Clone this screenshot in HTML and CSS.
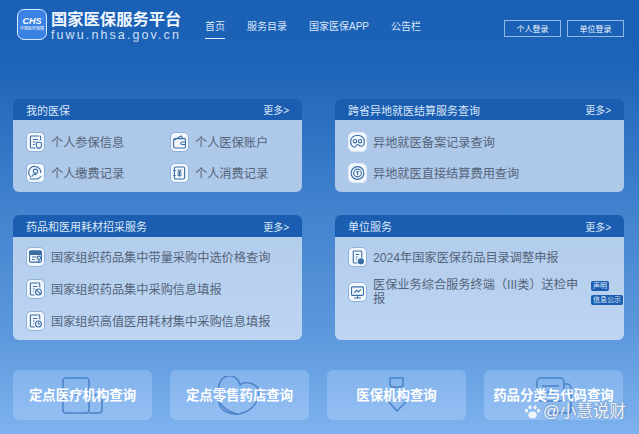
FILE: index.html
```html
<!DOCTYPE html>
<html lang="zh-CN">
<head>
  <meta charset="UTF-8">
  <title>国家医保服务平台</title>
  <link rel="stylesheet" href="styles.css">
</head>
<body>
  <header class="topo">
    <div class="marca">
      <div class="logo">
        <span class="logo-chs">CHS</span>
        <span class="logo-sub">中国医疗保障</span>
      </div>
      <div class="marca-texto">
        <div class="marca-nome">国家医保服务平台</div>
        <div class="marca-url">fuwu.nhsa.gov.cn</div>
      </div>
    </div>
    <nav class="menu">
      <a class="active">首页</a>
      <a>服务目录</a>
      <a>国家医保APP</a>
      <a>公告栏</a>
    </nav>
    <div class="entrar">
      <button>个人登录</button>
      <button>单位登录</button>
    </div>
  </header>

  <main class="paineis">
    <section class="painel painel-curto">
      <div class="painel-topo"><span>我的医保</span><span class="mais">更多&gt;</span></div>
      <div class="painel-corpo duas-col">
        <div class="item">
          <span class="icone"><svg viewBox="0 0 20 20"><path d="M14 3H5a1 1 0 0 0-1 1v12a1 1 0 0 0 1 1h5M16 8V4a1 1 0 0 0-1-1M7 7h6M7 10h3M7 13h2"/><path d="M11 11l3-1 3 1v3c0 2-1.500 3-3 3.500-1.500-.5-3-1.500-3-3.500z"/></svg></span>
          <span>个人参保信息</span>
        </div>
        <div class="item">
          <span class="icone"><svg viewBox="0 0 20 20"><path d="M3 8v7a2 2 0 0 0 2 2h11a1 1 0 0 0 1-1V7a1 1 0 0 0-1-1H5a2 2 0 0 0-2 2l9-5 2 3"/><path d="M17 10h-4a1.500 1.500 0 0 0 0 3h4"/></svg></span>
          <span>个人医保账户</span>
        </div>
        <div class="item">
          <span class="icone"><svg viewBox="0 0 20 20"><path d="M5 15a7 7 0 1 1 11-5"/><circle cx="10" cy="8" r="2.500"/><path d="M6 14c1-2 3-3 5-2M3 17h9l5-3"/></svg></span>
          <span>个人缴费记录</span>
        </div>
        <div class="item">
          <span class="icone"><svg viewBox="0 0 20 20"><rect x="4" y="3" width="12" height="14" rx="1.500"/><path d="M8 6l2 3 2-3M7.500 10h5M7.500 12.500h5M10 9v5.500M2.500 7h3M2.500 13h3"/></svg></span>
          <span>个人消费记录</span>
        </div>
      </div>
    </section>

    <section class="painel painel-curto">
      <div class="painel-topo"><span>跨省异地就医结算服务查询</span><span class="mais">更多&gt;</span></div>
      <div class="painel-corpo">
        <div class="item">
          <span class="icone sem-borda"><svg viewBox="0 0 20 20"><path d="M6 16c-3-1-4-4-4-7a8 7 0 0 1 16 0c0 3-1 6-4 6-2 0-2-2-4-2s-2 4-4 3z"/><circle cx="7" cy="9" r="2"/><circle cx="13" cy="9" r="2"/></svg></span>
          <span>异地就医备案记录查询</span>
        </div>
        <div class="item">
          <span class="icone sem-borda"><svg viewBox="0 0 20 20"><circle cx="10" cy="10" r="7.500"/><circle cx="10" cy="10" r="4.500"/><path d="M8 8.500h4M10 8.500v4"/></svg></span>
          <span>异地就医直接结算费用查询</span>
        </div>
      </div>
    </section>

    <section class="painel painel-alto">
      <div class="painel-topo"><span>药品和医用耗材招采服务</span><span class="mais">更多&gt;</span></div>
      <div class="painel-corpo">
        <div class="item">
          <span class="icone"><svg viewBox="0 0 20 20"><rect x="3" y="3" width="14" height="13" rx="1.500"/><path class="cheio" d="M3 4.500A1.500 1.500 0 0 1 4.500 3h11A1.500 1.500 0 0 1 17 4.500V7H3z"/><path d="M6 10h5M6 13h3"/><circle cx="14" cy="11" r="2"/><path d="M14 13v4"/></svg></span>
          <span>国家组织药品集中带量采购中选价格查询</span>
        </div>
        <div class="item">
          <span class="icone"><svg viewBox="0 0 20 20"><path d="M9 17H5a1 1 0 0 1-1-1V4a1 1 0 0 1 1-1h9a1 1 0 0 1 1 1v4M7 7h5M7 10h2M7 13h1"/><circle cx="13.500" cy="13.500" r="3.500"/><path d="M11 11l5 5"/></svg></span>
          <span>国家组织药品集中采购信息填报</span>
        </div>
        <div class="item">
          <span class="icone"><svg viewBox="0 0 20 20"><path d="M9 17H5a1 1 0 0 1-1-1V4a1 1 0 0 1 1-1h9a1 1 0 0 1 1 1v4M7 7h5M7 10h2M7 13h1"/><circle cx="13.500" cy="13.500" r="3.500"/><path d="M13.500 11.500v2h2"/></svg></span>
          <span>国家组织高值医用耗材集中采购信息填报</span>
        </div>
      </div>
    </section>

    <section class="painel painel-alto">
      <div class="painel-topo"><span>单位服务</span><span class="mais">更多&gt;</span></div>
      <div class="painel-corpo">
        <div class="item">
          <span class="icone"><svg viewBox="0 0 20 20"><path d="M10 17H6a1 1 0 0 1-1-1V4a1 1 0 0 1 1-1h8a1 1 0 0 1 1 1v7M8 7h4M8 10h2M8 13h1"/><circle class="cheio" cx="14" cy="15" r="3"/></svg></span>
          <span>2024年国家医保药品目录调整申报</span>
        </div>
        <div class="item item-duplo">
          <span class="icone"><svg viewBox="0 0 20 20"><rect x="3" y="4" width="14" height="10" rx="1"/><path d="M6 11l3-3 2 2 3-3M6 17h8M10 14v3"/></svg></span>
          <span class="item-texto">医保业务综合服务终端（III类）送检申报</span>
          <span class="selos">
            <span class="selo">声明</span>
            <span class="selo">信息公示</span>
          </span>
        </div>
      </div>
    </section>
  </main>

  <div class="atalhos">
    <a class="atalho">
      <svg viewBox="0 0 50 40"><rect x="4" y="2" width="26" height="35" rx="3"/><path d="M30 19h10a3 3 0 0 1 3 3v12a3 3 0 0 1-3 3H30M17 14v6"/></svg>
      <span>定点医疗机构查询</span>
    </a>
    <a class="atalho">
      <svg viewBox="0 0 50 40"><path d="M3 14a10 11 0 0 1 21-5c5-5 20-2 19 10-1 8-9 17-20 19-10 1-19-4-20-11z"/><path d="M4 27c4 6 9 9 17 11"/></svg>
      <span>定点零售药店查询</span>
    </a>
    <a class="atalho">
      <svg viewBox="0 0 50 40"><path d="M17 2h13v6a3 3 0 0 1-3 3h-7a3 3 0 0 1-3-3z"/><path d="M15 25l9 10 10-10"/></svg>
      <span>医保机构查询</span>
    </a>
    <a class="atalho">
      <svg viewBox="0 0 50 40"><rect x="7" y="2" width="27" height="23" rx="4"/><path d="M12 10h17M12 16h12M34 8h3a4 4 0 0 1 4 4v22a3 3 0 0 1-3 3H20"/></svg>
      <span>药品分类与代码查询</span>
    </a>
  </div>

  <div class="marca-dagua">
    <svg viewBox="0 0 20 20"><ellipse cx="10" cy="14" rx="5" ry="4"/><ellipse cx="7" cy="5" rx="1.800" ry="2.500"/><ellipse cx="13" cy="5" rx="1.800" ry="2.500"/><ellipse cx="3" cy="9" rx="1.800" ry="2.300"/><ellipse cx="17" cy="9" rx="1.800" ry="2.300"/></svg>
    <span>@小慧说财</span>
  </div>
</body>
</html>
```

FILE: styles.css
```css
html, body {
  margin: 0;
  height: 434px;
  overflow: hidden;
}
body {
  position: relative;
  width: 639px;
  font-family: "Liberation Sans", "Noto Sans CJK SC", sans-serif;
  background: linear-gradient(180deg, #1a60b5 0, #1c62b7 60px, #3d7fcb 190px, #5c97dc 330px, #7db2ee 434px);
  color: #55647a;
}
.topo {
  display: flex;
  align-items: flex-start;
  height: 99px;
  box-sizing: border-box;
  padding: 9px 15px 0 17px;
}
.marca {
  display: flex;
  gap: 4px;
}
.logo {
  width: 30px;
  height: 31px;
  box-sizing: border-box;
  border: 1px solid #d6e7fb;
  border-radius: 7px;
  background: #3a82e4;
  color: white;
  display: flex;
  flex-direction: column;
  align-items: center;
  padding-top: 7px;
}
.logo-chs {
  font-size: 9px;
  line-height: 9px;
  font-weight: bold;
  font-style: italic;
}
.logo-sub {
  font-size: 4px;
  line-height: 5px;
  white-space: nowrap;
}
.marca-texto {
  width: 131px;
  padding-top: 1px;
  color: #eef5fd;
}
.marca-nome {
  font-size: 16.300px;
  line-height: 19px;
  font-weight: bold;
  white-space: nowrap;
}
.marca-url {
  font-size: 12.500px;
  line-height: 13px;
  letter-spacing: 2.100px;
  white-space: nowrap;
  color: #cfe0f5;
}
.menu {
  display: flex;
  gap: 22px;
  margin-left: 23px;
  padding-top: 10px;
  font-size: 10px;
  line-height: 16px;
  color: #d8e6f7;
}
.menu a {
  height: 19px;
  white-space: nowrap;
}
.menu a.active {
  border-bottom: 1px solid #e8f1fb;
}
.entrar {
  display: flex;
  gap: 6px;
  margin-left: auto;
  padding-top: 11px;
}
.entrar button {
  width: 57px;
  height: 17px;
  padding: 0;
  background: transparent;
  border: 1px solid #8fb9e8;
  color: #f0f6fd;
  font-family: inherit;
  font-size: 8px;
}
.paineis {
  display: grid;
  grid-template-columns: 289px 289px;
  column-gap: 33px;
  row-gap: 23px;
  padding: 0 15px 0 13px;
}
.painel {
  border-radius: 6px;
  overflow: hidden;
  display: flex;
  flex-direction: column;
}
.painel-curto {
  height: 93px;
}
.painel-alto {
  height: 125px;
}
.painel-topo {
  display: flex;
  justify-content: space-between;
  align-items: center;
  height: 21px;
  flex-shrink: 0;
  padding: 0 13px;
  background: #1b5db0;
  color: #d9e7f8;
  font-size: 11px;
}
.painel-alto .painel-topo {
  height: 22px;
}
.mais {
  font-size: 10px;
}
.painel-corpo {
  flex: 1;
  padding: 4px 12px 4px 13px;
  display: flex;
  flex-direction: column;
}
.painel-curto .painel-corpo {
  padding-top: 6px;
  background: #adc8e8;
}
.painel-curto .item {
  height: 31.500px;
}
.painel-alto .painel-corpo {
  background: linear-gradient(180deg, #b3cdec, #bdd5f2);
}
.duas-col {
  display: grid;
  grid-template-columns: 144px 1fr;
  align-content: start;
}
.item {
  display: flex;
  align-items: center;
  gap: 6px;
  height: 32px;
  font-size: 12.200px;
  white-space: nowrap;
}
.icone {
  width: 19px;
  height: 20px;
  flex-shrink: 0;
  box-sizing: border-box;
  background: #f2f7fd;
  border: 1px solid #8fb2da;
  border-radius: 5px;
  display: flex;
}
.icone.sem-borda {
  border-color: #dce9f8;
}
.icone svg {
  width: 100%;
  height: 100%;
  fill: none;
  stroke: #3a6ea5;
  stroke-width: 1.300;
}
.icone svg .cheio {
  fill: #3a6ea5;
}
.item-duplo {
  height: 38px;
  line-height: 14px;
  white-space: normal;
}
.item-texto {
  width: 210px;
  flex-shrink: 0;
}
.selos {
  position: absolute;
  left: 591px;
  top: 281px;
  display: flex;
  flex-direction: column;
  align-items: flex-start;
  gap: 4px;
}
.selo {
  background: #1b5db0;
  color: #dfeafa;
  font-size: 7px;
  line-height: 10px;
  border-radius: 2px;
  padding: 0 2px;
  white-space: nowrap;
}
.atalhos {
  display: flex;
  gap: 18px;
  padding: 30px 16px 0 13px;
}
.atalho {
  position: relative;
  flex: 1;
  height: 50px;
  border-radius: 6px;
  background: linear-gradient(180deg, #82b3ec, #93bef2);
  display: flex;
  align-items: center;
  justify-content: center;
}
.atalho svg {
  position: absolute;
  left: 46px;
  top: 6px;
  width: 50px;
  height: 40px;
  fill: none;
  stroke: #4a83c6;
  stroke-width: 1.500;
}
.atalho span {
  position: relative;
  color: white;
  font-size: 13.400px;
  font-weight: bold;
  white-space: nowrap;
  margin-bottom: 2px;
}
.marca-dagua {
  position: absolute;
  left: 524px;
  top: 401px;
  display: flex;
  align-items: center;
  gap: 2px;
  color: #f0f5fb;
  font-size: 16.500px;
  line-height: 20px;
  text-shadow: 0 0 2px rgba(60, 80, 110, 0.6);
  white-space: nowrap;
}
.marca-dagua svg {
  width: 17px;
  height: 17px;
  fill: #f0f5fb;
}
```
